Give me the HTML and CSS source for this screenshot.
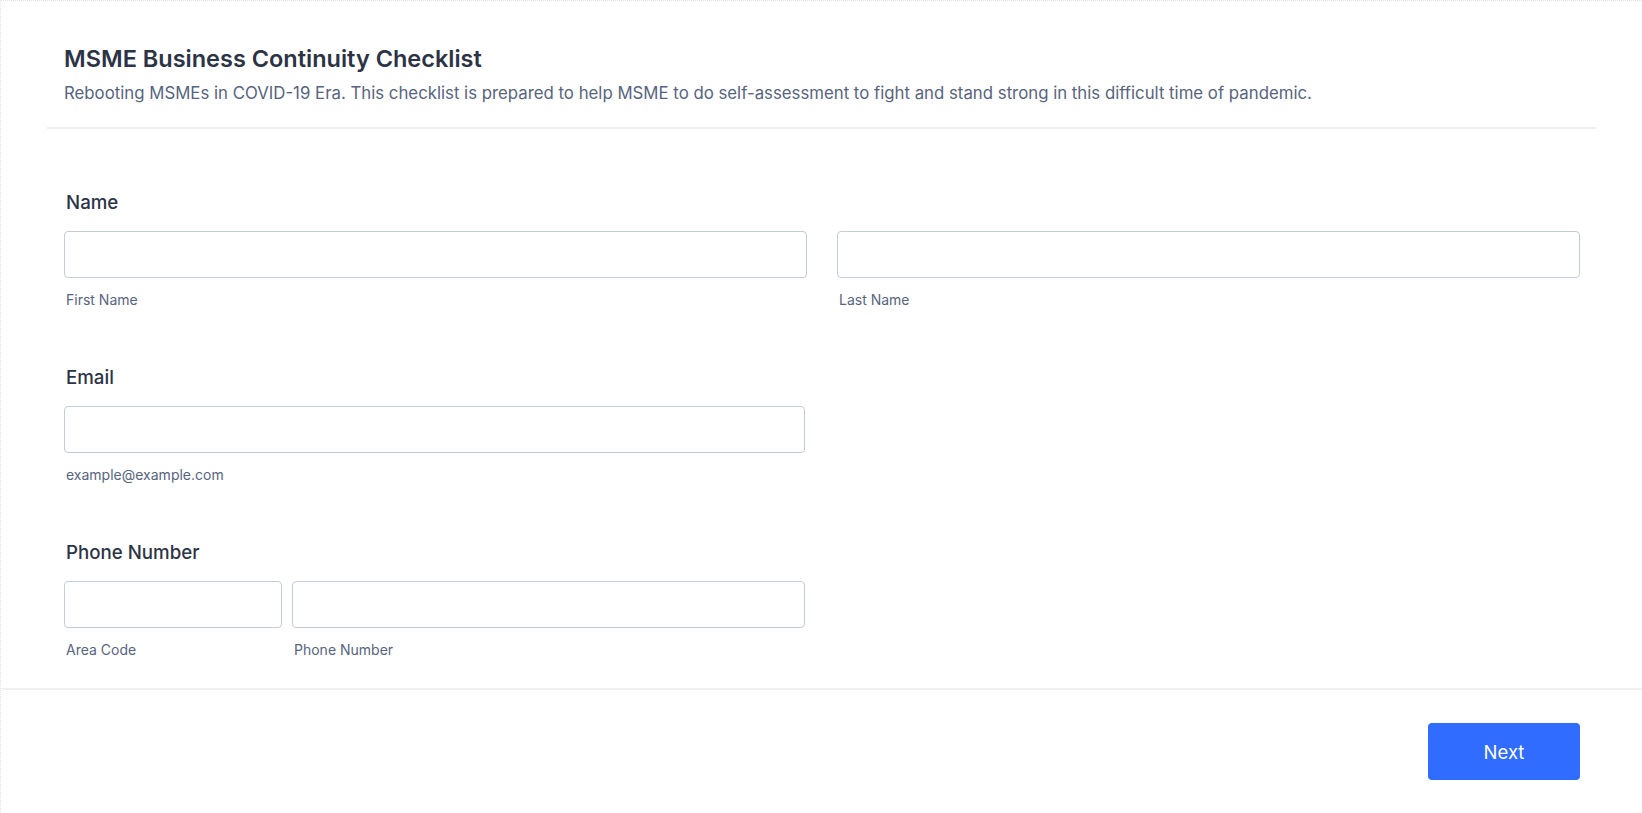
FILE: index.html
```html
<!DOCTYPE html>
<html lang="en">
<head>
<meta charset="utf-8">
<title>MSME Business Continuity Checklist</title>
<link rel="stylesheet" href="styles.css">
</head>
<body>
<div class="form">
  <div class="header">
    <h1 class="title">MSME Business Continuity Checklist</h1>
    <p class="subtitle">Rebooting MSMEs in COVID-19 Era. This checklist is prepared to help MSME to do self-assessment to fight and stand strong in this difficult time of pandemic.</p>
  </div>
  <div class="fields">
    <div class="field">
      <label class="label">Name</label>
      <div class="row row-name">
        <div class="col">
          <input class="input" type="text">
          <span class="sublabel">First Name</span>
        </div>
        <div class="col">
          <input class="input" type="text">
          <span class="sublabel">Last Name</span>
        </div>
      </div>
    </div>
    <div class="field">
      <label class="label">Email</label>
      <div class="row row-half">
        <div class="col">
          <input class="input" type="email">
          <span class="sublabel">example@example.com</span>
        </div>
      </div>
    </div>
    <div class="field">
      <label class="label">Phone Number</label>
      <div class="row row-phone">
        <div class="col">
          <input class="input" type="text">
          <span class="sublabel">Area Code</span>
        </div>
        <div class="col">
          <input class="input" type="text">
          <span class="sublabel">Phone Number</span>
        </div>
      </div>
    </div>
  </div>
  <div class="footer">
    <button class="next" type="button">Next</button>
  </div>
</div>
</body>
</html>
```
FILE: styles.css
```css
* { box-sizing: border-box; }
html, body {
  margin: 0;
  padding: 0;
  background: #ffffff;
}
body {
  font-family: Inter, "Noto Sans", "Liberation Sans", sans-serif;
  color: #2c3345;
}
.form {
  min-height: 813px;
  border-left: 1px dotted #e3e3e3;
  border-top: 1px dotted #e3e3e3;
}
.header {
  margin: 0 46px;
  padding: 44px 17px 22px;
  border-bottom: 2px solid #f0f0f5;
}
.title {
  margin: 0;
  font-size: 23.5px;
  line-height: 27px;
  font-weight: 600;
  color: #2c3345;
}
.subtitle {
  margin: 9px 0 0;
  font-size: 16.8px;
  line-height: 24px;
  color: #57647e;
}
.fields {
  margin: 0 46px;
  padding: 63px 16px 29px 17px;
  display: flex;
  flex-direction: column;
  gap: 58px;
}
.field {
  display: flex;
  flex-direction: column;
}
.label {
  font-size: 18.7px;
  line-height: 22px;
  font-weight: 500;
  color: #2c3345;
  padding-left: 2px;
  margin-bottom: 17px;
}
.row {
  display: flex;
}
.row-name { gap: 30px; }
.row-name .col { flex: 1; }
.row-half .col { width: 741px; }
.row-phone { gap: 10px; }
.row-phone .col:first-child { width: 218px; }
.row-phone .col:last-child { width: 513px; }
.col {
  display: flex;
  flex-direction: column;
}
.input {
  height: 47px;
  width: 100%;
  border: 1px solid #c3cad8;
  border-radius: 4px;
  background: #fff;
  font: inherit;
  margin: 0;
}
.sublabel {
  margin-top: 13px;
  font-size: 14px;
  line-height: 18px;
  color: #57647e;
  padding-left: 2px;
}
.footer {
  border-top: 2px solid #f0f0f5;
  display: flex;
  justify-content: flex-end;
  padding: 33px 62px 0 0;
}
.next {
  width: 152px;
  height: 57px;
  border: none;
  border-radius: 4px;
  background: #306cff;
  color: #ffffff;
  font-family: Inter, "Noto Sans", "Liberation Sans", sans-serif;
  font-size: 18.5px;
  font-weight: 400;
}
```
